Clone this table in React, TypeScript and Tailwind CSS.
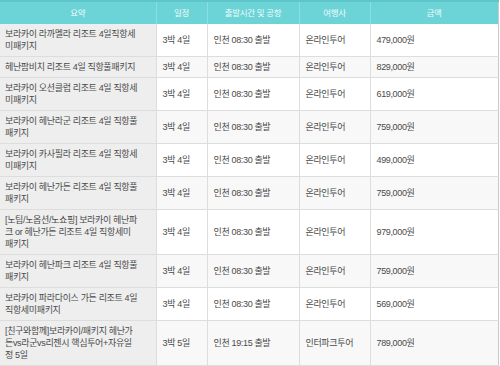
interface Tour {
  title: string[]
  days: string
  depart: string
  agency: string
  price: string
}

const TOURS: Tour[] = [
  { title: ['보라카이 라까멜라 리조트 4일직항세', '미패키지'], days: '3박 4일', depart: '인천 08:30 출발', agency: '온라인투어', price: '479,000원' },
  { title: ['헤난팜비치 리조트 4일 직항풀패키지'], days: '3박 4일', depart: '인천 08:30 출발', agency: '온라인투어', price: '829,000원' },
  { title: ['보라카이 오션클럽 리조트 4일 직항세', '미패키지'], days: '3박 4일', depart: '인천 08:30 출발', agency: '온라인투어', price: '619,000원' },
  { title: ['보라카이 헤난라군 리조트 4일 직항풀', '패키지'], days: '3박 4일', depart: '인천 08:30 출발', agency: '온라인투어', price: '759,000원' },
  { title: ['보라카이 카사필라 리조트 4일 직항세', '미패키지'], days: '3박 4일', depart: '인천 08:30 출발', agency: '온라인투어', price: '499,000원' },
  { title: ['보라카이 헤난가든 리조트 4일 직항풀', '패키지'], days: '3박 4일', depart: '인천 08:30 출발', agency: '온라인투어', price: '759,000원' },
  { title: ['[노팁/노옵션/노쇼핑] 보라카이 헤난파', '크 or 헤난가든 리조트 4일 직항세미', '패키지'], days: '3박 4일', depart: '인천 08:30 출발', agency: '온라인투어', price: '979,000원' },
  { title: ['보라카이 헤난파크 리조트 4일 직항풀', '패키지'], days: '3박 4일', depart: '인천 08:30 출발', agency: '온라인투어', price: '759,000원' },
  { title: ['보라카이 파라다이스 가든 리조트 4일', '직항세미패키지'], days: '3박 4일', depart: '인천 08:30 출발', agency: '온라인투어', price: '569,000원' },
  { title: ['[친구와함께]보라카이/패키지 헤난가', '든vs라군vs리젠시 핵심투어+자유일', '정 5일'], days: '3박 5일', depart: '인천 19:15 출발', agency: '인터파크투어', price: '789,000원' },
]

const HEADERS = ['요약', '일정', '출발시간 및 공항', '여행사', '금액']

export default function App() {
  return (
    <div className="w-[500px] h-[366px] overflow-hidden bg-white font-['Liberation_Sans','Noto_Sans_CJK_KR',sans-serif] text-[9px] leading-[12px] tracking-[-0.35px] text-[#4a4a4a]">
      <table className="w-[498px] table-fixed border-collapse">
        <colgroup>
          <col className="w-[156px]" />
          <col className="w-[51px]" />
          <col className="w-[92px]" />
          <col className="w-[71px]" />
          <col className="w-[128px]" />
        </colgroup>
        <thead>
          <tr className="bg-[#6cd3d6] border-t-2 border-t-[#5ec6c9]">
            {HEADERS.map((h, i) => (
              <th
                key={h}
                className={
                  'h-[23px] p-0 text-center font-normal text-[8.5px] text-[#effcfc] border-[#8cdfe1] ' +
                  (i < HEADERS.length - 1 ? 'border-r' : 'border-r border-r-[#c9c9c9]')
                }
              >
                {h}
              </th>
            ))}
          </tr>
        </thead>
        <tbody>
          {TOURS.map((t, i) => {
            const rowBg = i % 2 === 1 ? 'bg-[#f8f8f8]' : 'bg-white'
            const cell = 'px-[6px] py-[4px] border-b border-r border-[#dddddd] whitespace-nowrap text-left align-middle ' + rowBg
            return (
              <tr key={i}>
                <td className="pl-[5px] pr-[4px] py-[4px] border-b border-r border-[#dddddd] bg-[#eeeeee] whitespace-nowrap text-left align-middle">
                  {t.title.map((line, j) => (
                    <div key={j}>{line}</div>
                  ))}
                </td>
                <td className={cell}>{t.days}</td>
                <td className={cell}>{t.depart}</td>
                <td className={cell}>{t.agency}</td>
                <td className={cell + ' border-r-[#c9c9c9]'}>{t.price}</td>
              </tr>
            )
          })}
        </tbody>
      </table>
    </div>
  )
}
